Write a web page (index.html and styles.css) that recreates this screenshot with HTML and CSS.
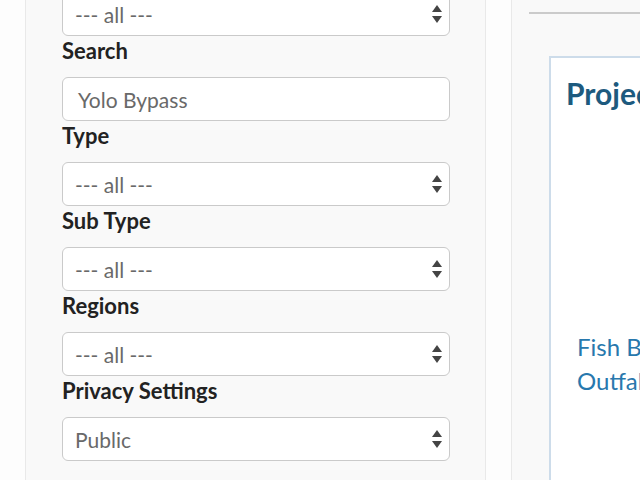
FILE: index.html
```html
<!DOCTYPE html>
<html lang="en">
<head>
<meta charset="utf-8">
<title>Project Filters</title>
<link rel="stylesheet" href="styles.css">
</head>
<body>
<div class="page">
  <aside class="filters">
    <div class="stack">
      <div class="field select"><span class="value">--- all ---</span><svg class="arrows" width="10" height="18" viewBox="0 0 10 18"><polygon points="5,0 10,7 0,7"/><polygon points="0,11 10,11 5,18"/></svg></div>
      <label class="label">Search</label>
      <div class="field input"><span class="value">Yolo Bypass</span></div>
      <label class="label">Type</label>
      <div class="field select"><span class="value">--- all ---</span><svg class="arrows" width="10" height="18" viewBox="0 0 10 18"><polygon points="5,0 10,7 0,7"/><polygon points="0,11 10,11 5,18"/></svg></div>
      <label class="label">Sub Type</label>
      <div class="field select"><span class="value">--- all ---</span><svg class="arrows" width="10" height="18" viewBox="0 0 10 18"><polygon points="5,0 10,7 0,7"/><polygon points="0,11 10,11 5,18"/></svg></div>
      <label class="label">Regions</label>
      <div class="field select"><span class="value">--- all ---</span><svg class="arrows" width="10" height="18" viewBox="0 0 10 18"><polygon points="5,0 10,7 0,7"/><polygon points="0,11 10,11 5,18"/></svg></div>
      <label class="label">Privacy Settings</label>
      <div class="field select"><span class="value">Public</span><svg class="arrows" width="10" height="18" viewBox="0 0 10 18"><polygon points="5,0 10,7 0,7"/><polygon points="0,11 10,11 5,18"/></svg></div>
    </div>
  </aside>
  <main class="content">
    <hr class="rule">
    <section class="card">
      <h2 class="card-title">Projects</h2>
      <div class="thumb"></div>
      <a class="tile-link" href="#">Fish Bypass<br>Outfall</a>
    </section>
  </main>
</div>
</body>
</html>
```
FILE: styles.css
```css
html, body {
  margin: 0;
  padding: 0;
  height: 100%;
  overflow: hidden;
  background: #fdfdfd;
  font-family: Lato, "Open Sans", "Liberation Sans", sans-serif;
}

.page {
  display: flex;
  height: 100%;
  padding-left: 25px;
  gap: 25px;
}

.filters {
  flex: 0 0 461px;
  box-sizing: border-box;
  background: #f9f9f9;
  border-left: 1px solid #e9e9e9;
  border-right: 1px solid #e9e9e9;
  padding: 0 35px 0 36px;
}

.stack {
  display: flex;
  flex-direction: column;
  margin-top: -8px;
}

.field {
  box-sizing: border-box;
  height: 44px;
  display: flex;
  align-items: center;
  justify-content: space-between;
  background: #fff;
  border: 1px solid #cacaca;
  border-radius: 6px;
  color: #696969;
  font-size: 21px;
}

.select {
  padding: 0 7px 0 12px;
}

.input {
  padding: 0 15px;
}

.arrows {
  fill: #444;
  flex: none;
}

.label {
  display: block;
  font-weight: 700;
  font-size: 22px;
  line-height: 26px;
  color: #222;
  padding-top: 2px;
  margin-bottom: 13px;
}

.content {
  flex: 1;
  min-width: 0;
  box-sizing: border-box;
  background: #f9f9f9;
  border-left: 1px solid #e9e9e9;
  padding: 12px 0 0 17px;
}

.rule {
  margin: 0;
  border: 0;
  border-top: 2px solid #cbcbcb;
  height: 0;
}

.card {
  box-sizing: border-box;
  width: 340px;
  margin: 42px 0 0 20px;
  background: #fff;
  border: 2px solid #cddcea;
  padding: 17px 15px;
  height: 600px;
}

.card-title {
  margin: 0;
  font-size: 30px;
  line-height: 36px;
  font-weight: 700;
  color: #1d5a7e;
}

.thumb {
  height: 219px;
}

.tile-link {
  display: block;
  margin-left: 11px;
  font-size: 24px;
  line-height: 34px;
  color: #2878ad;
  text-decoration: none;
  white-space: nowrap;
}
```
